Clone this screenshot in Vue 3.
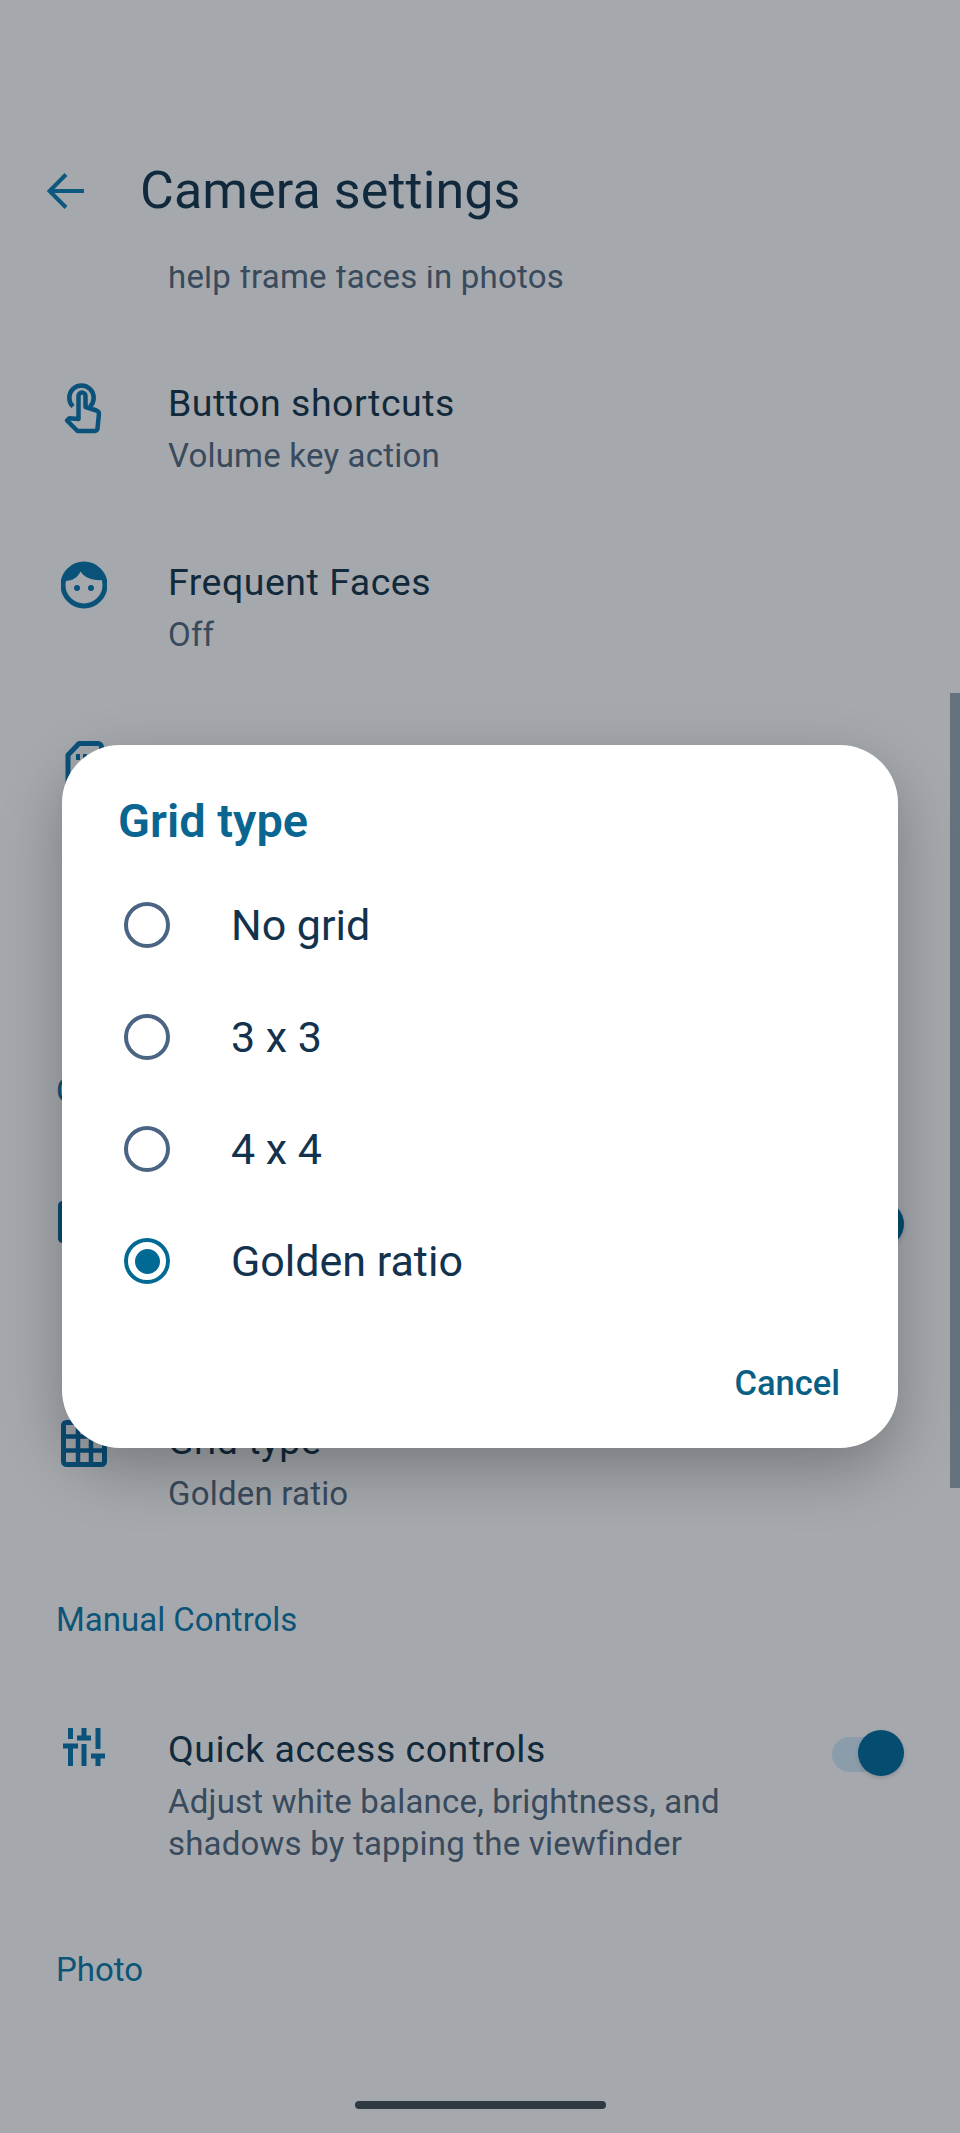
<script setup>
const options = [
  { label: 'No grid', on: false },
  { label: '3 x 3', on: false },
  { label: '4 x 4', on: false },
  { label: 'Golden ratio', on: true },
]
</script>

<template>
  <div class="page">
    <header class="bar">
      <svg class="back" width="37" height="36" viewBox="0 0 37 36" fill="none">
        <path d="M37 18H3M19 1.5 2.5 18 19 34.5" stroke="#0c587e" stroke-width="4" />
      </svg>
      <h1 class="bar-title">Camera settings</h1>
    </header>

    <main class="list">
      <div class="partial"><span class="sub">help frame faces in photos</span></div>

      <section class="row">
        <svg class="icon" width="46" height="54" viewBox="0 0 46 54" fill="none" stroke="#0a527a" stroke-width="4.5" stroke-linejoin="round">
          <path d="M12 24.5A12.2 12.2 0 1 1 29 24.5" />
          <path d="M17.5 37V14a3.5 3.5 0 0 1 7 0v11l11 3.5c2 .7 2.6 2 2.4 3.8L36.500 46.500a2.500 2.500 0 0 1-2.500 2.500H16.500L6 38.500l2.500-2.200Z" />
        </svg>
        <div class="text">
          <div class="title">Button shortcuts</div>
          <div class="sub">Volume key action</div>
        </div>
      </section>

      <section class="row">
        <svg class="icon" width="46" height="48" viewBox="0 0 46 48" fill="none">
          <circle cx="23" cy="24" r="21" stroke="#0a527a" stroke-width="5" />
          <path d="M4 20C12 20 17 16 19.500 10.500 23 16 31 20 42 19 39 9 31 3 23 3 14 3 6 9 4 20Z" fill="#0a527a" />
          <circle cx="16" cy="27" r="3" fill="#0a527a" />
          <circle cx="30" cy="27" r="3" fill="#0a527a" />
        </svg>
        <div class="text">
          <div class="title">Frequent Faces</div>
          <div class="sub">Off</div>
        </div>
      </section>

      <section class="row">
        <svg class="icon" width="46" height="48" viewBox="0 0 46 48" fill="none">
          <path d="M7 47V15L18 3.500H37a3.500 3.500 0 0 1 3.500 3.500V47" stroke="#0a527a" stroke-width="5" stroke-linejoin="round" />
          <path d="M17 14v6M24 14v8M31 14v8" stroke="#0a527a" stroke-width="4" />
        </svg>
        <div class="text">
          <div class="title">Device storage</div>
          <div class="sub">Internal</div>
        </div>
      </section>

      <div class="hidden-row"></div>

      <h2 class="heading">Composition</h2>

      <section class="row">
        <svg class="icon icon-wide" width="52" height="42" viewBox="0 0 52 42" fill="none">
          <rect x="2.500" y="2.500" width="47" height="37" rx="2" stroke="#0a4a70" stroke-width="5" />
        </svg>
        <div class="text">
          <div class="title">Framing hints</div>
          <div class="sub">Show level and<br />framing guides</div>
        </div>
        <div class="toggle"><span class="track"></span><span class="knob"></span></div>
      </section>

      <section class="row">
        <svg class="icon" width="46" height="47" viewBox="0 0 46 47" fill="none">
          <rect x="2.500" y="2.500" width="41" height="42" rx="3" stroke="#0a4e78" stroke-width="5" />
          <path d="M17 3v41M30 3v41M3 16.500h40M3 30.500h40" stroke="#0a4e78" stroke-width="4.500" />
        </svg>
        <div class="text">
          <div class="title">Grid type</div>
          <div class="sub">Golden ratio</div>
        </div>
      </section>

      <h2 class="heading">Manual Controls</h2>

      <section class="row">
        <svg class="icon" width="46" height="38" viewBox="0 0 46 38" fill="none" stroke="#0a527a" stroke-width="5">
          <path d="M9.500 0v11M2 18h15M9.500 18v20" />
          <path d="M23 0v8M16 10h14M23 16v22" />
          <path d="M37 0v21M30 28h14M37 28v10" />
        </svg>
        <div class="text">
          <div class="title">Quick access controls</div>
          <div class="sub">Adjust white balance, brightness, and shadows by tapping the viewfinder</div>
        </div>
        <div class="toggle"><span class="track"></span><span class="knob"></span></div>
      </section>

      <h2 class="heading">Photo</h2>
    </main>

    <div class="home"></div>
    <div class="scrollbar"></div>

    <div class="dialog">
      <h3 class="dialog-title">Grid type</h3>
      <div class="option" v-for="opt in options" :key="opt.label">
        <span class="radio" :class="{ on: opt.on }"></span>
        <span class="option-label">{{ opt.label }}</span>
      </div>
      <div class="actions"><span class="cancel">Cancel</span></div>
    </div>
  </div>
</template>

<style scoped>
.page {
  position: relative;
  width: 960px;
  height: 2133px;
  overflow: hidden;
  background: #a5a9ad;
  display: flex;
  flex-direction: column;
  font-family: Roboto, sans-serif;
}
.bar {
  height: 266px;
  flex: none;
  box-sizing: border-box;
  padding: 161px 0 0 47px;
  display: flex;
  align-items: flex-start;
  gap: 56px;
}
.back { margin-top: 12px; flex: none; }
.bar-title {
  margin: 0;
  font-size: 52px;
  line-height: 60px;
  font-weight: 400;
  letter-spacing: 0.1px;
  color: #10293c;
}
.list { flex: 1; display: flex; flex-direction: column; }
.partial {
  height: 32px;
  margin-bottom: 42px;
  padding-left: 168px;
  overflow: hidden;
  display: flex;
  align-items: flex-end;
  flex: none;
}
.row {
  display: flex;
  align-items: flex-start;
  padding: 42px 56px 42px 61px;
  gap: 61px;
  flex: none;
}
.icon { flex: none; }
.icon-wide { margin-left: -3px; margin-right: -3px; margin-top: 2px; }
.text { flex: 1; min-width: 0; }
.title {
  font-size: 37.5px;
  line-height: 43px;
  margin-bottom: 10px;
  letter-spacing: 0.5px;
  color: #12293b;
}
.sub {
  font-size: 33px;
  line-height: 42px;
  letter-spacing: 0.2px;
  color: #394a5c;
}
.partial .sub { white-space: nowrap; }
.hidden-row { height: 151px; flex: none; }
.heading {
  margin: 43px 0 46px 56px;
  font-size: 33px;
  line-height: 40px;
  font-weight: 400;
  color: #0c5478;
  flex: none;
}
.toggle {
  position: relative;
  width: 72px;
  height: 46px;
  margin-top: 2px;
  flex: none;
}
.track {
  position: absolute;
  left: 0;
  top: 7px;
  width: 60px;
  height: 35px;
  border-radius: 18px;
  background: #8b9dab;
}
.knob {
  position: absolute;
  right: 0;
  top: 0;
  width: 46px;
  height: 46px;
  border-radius: 50%;
  background: #044c70;
  box-shadow: 0 2px 4px rgba(0, 0, 0, 0.15);
}
.home {
  position: absolute;
  left: 355px;
  bottom: 24px;
  width: 251px;
  height: 8px;
  border-radius: 4px;
  background: #2e3942;
}
.scrollbar {
  position: absolute;
  right: 0;
  top: 693px;
  width: 10px;
  height: 795px;
  background: #66737e;
}
.dialog {
  position: absolute;
  left: 62px;
  top: 745px;
  width: 836px;
  height: 703px;
  box-sizing: border-box;
  border-radius: 58px;
  background: #fff;
  box-shadow: 0 22px 60px rgba(0, 0, 0, 0.27);
  display: flex;
  flex-direction: column;
}
.dialog-title {
  margin: 0;
  height: 124px;
  box-sizing: border-box;
  padding: 50px 0 0 56px;
  font-size: 47px;
  line-height: 52px;
  font-weight: 600;
  color: #0a6691;
  flex: none;
}
.option {
  height: 112px;
  display: flex;
  align-items: center;
  padding-left: 62px;
  gap: 61px;
  flex: none;
}
.radio {
  width: 46px;
  height: 46px;
  box-sizing: border-box;
  border: 4.5px solid #4a6583;
  border-radius: 50%;
  flex: none;
  position: relative;
}
.radio.on { border-color: #006a94; }
.radio.on::after {
  content: '';
  position: absolute;
  inset: 6.5px;
  border-radius: 50%;
  background: #006a94;
}
.option-label {
  font-size: 43px;
  line-height: 50px;
  color: #12324d;
}
.actions {
  margin-top: auto;
  padding: 0 58px 45px 0;
  display: flex;
  justify-content: flex-end;
}
.cancel {
  font-size: 34.5px;
  line-height: 40px;
  font-weight: 500;
  color: #0a5f85;
}
</style>

<style>
html, body { margin: 0; background: #a5a9ad; }
</style>
